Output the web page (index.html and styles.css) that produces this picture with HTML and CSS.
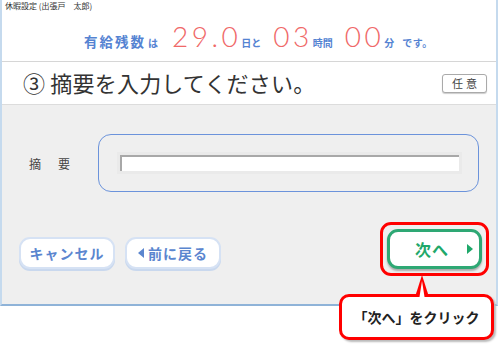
FILE: index.html
```html
<!DOCTYPE html>
<html lang="ja">
<head>
    <meta charset="UTF-8">
    <title>休暇設定</title>
    <link rel="stylesheet" href="styles.css">
</head>
<body>
    <div class="window">
        <div class="titlebar">休暇設定 (出張戸　太郎)</div>
        <div class="summary">
            <span class="lbl">有給残数</span><span class="sm">は</span>
            <span class="num first">29.0</span><span class="sm">日と</span>
            <span class="num">03</span><span class="sm">時間</span>
            <span class="num">00</span><span class="sm">分</span>
            <span class="sm tail">です。</span>
        </div>
        <div class="step">
            <h1>③ 摘要を入力してください。</h1>
            <span class="badge">任意</span>
        </div>
        <div class="content">
            <div class="field">
                <label for="tekiyo">摘　要</label>
                <div class="field-box">
                    <input type="text" id="tekiyo">
                </div>
            </div>
            <div class="actions">
                <button class="btn">キャンセル</button>
                <button class="btn back"><span class="tri-left"></span>前に戻る</button>
                <div class="next-wrap">
                    <button class="btn next">次へ<span class="tri-right"></span></button>
                </div>
            </div>
        </div>
        <div class="callout">
            <span class="callout-text">「次へ」をクリック</span>
        </div>
    </div>
</body>
</html>
```
FILE: styles.css
```css
body {
    margin: 0;
    min-height: 345px;
    font-family: "Noto Sans CJK JP", sans-serif;
    background: #fff;
}
.window {
    position: relative;
    width: 494px;
    border-left: 2px solid #c5daee;
    border-right: 2px solid #c5daee;
    border-bottom: 2px solid #8fb3d8;
}
.titlebar {
    height: 16px;
    font-size: 8px;
    line-height: 12px;
    padding-left: 3px;
    color: #333;
}
.summary {
    height: 45px;
    border-bottom: 1px solid #d6d6d6;
    display: flex;
    align-items: baseline;
    padding-left: 82px;
    color: #5583d2;
}
.summary .lbl {
    font-size: 13.5px;
    font-weight: bold;
    letter-spacing: 2px;
    margin-right: 2px;
}
.summary .sm {
    font-size: 10px;
    font-weight: bold;
}
.summary .num {
    font-family: "Lato", sans-serif;
    font-weight: 300;
    font-size: 28px;
    letter-spacing: 3.5px;
    color: #f06868;
    margin: 0 0 0 12px;
    line-height: 40px;
}
.summary .num.first {
    margin-left: 14px;
}
.summary .tail {
    margin-left: 8px;
    letter-spacing: 0.5px;
}
.step {
    height: 42px;
    border-bottom: 1px solid #dcdcdc;
    display: flex;
    align-items: center;
    justify-content: space-between;
    padding: 0 9px 0 21px;
}
.step h1 {
    margin: 0 0 3px;
    font-size: 22px;
    font-weight: normal;
    color: #333;
    letter-spacing: 0.2px;
}
.badge {
    font-size: 11px;
    line-height: 15px;
    color: #444;
    letter-spacing: 3px;
    padding: 1px 6px 1px 9px;
    border: 1px solid #aaa;
    border-radius: 3px;
    background: #fff;
    box-shadow: 0 1px 1px #ccc;
}
.content {
    background: #efefef;
    height: 199px;
    padding-top: 29px;
    box-sizing: border-box;
}
.field {
    display: flex;
    align-items: center;
}
.field label {
    width: 96px;
    padding-left: 27px;
    box-sizing: border-box;
    font-size: 12px;
    letter-spacing: 2.5px;
    color: #444;
}
.field-box {
    width: 381px;
    height: 58px;
    border: 1px solid #6b93db;
    border-radius: 13px;
    box-sizing: border-box;
    display: flex;
    align-items: center;
    padding-left: 21px;
}
.field-box input {
    width: 339px;
    height: 16px;
    border: none;
    border-top: 2px solid #a8a8a8;
    border-left: 2px solid #a8a8a8;
    box-sizing: border-box;
    background: #fff;
    outline: 3px solid #eaeaea;
}
.actions {
    display: flex;
    align-items: flex-start;
    margin-top: 30px;
    padding-left: 17px;
}
.btn {
    font-family: "Noto Sans CJK JP", sans-serif;
    font-weight: bold;
    font-size: 14px;
    letter-spacing: 1px;
    color: #5b86cf;
    background: #fff;
    border: 2px solid #d6e2f4;
    border-radius: 11px;
    box-shadow: 0 2px 0 #c9d8ee;
    width: 96px;
    height: 32px;
    display: flex;
    align-items: center;
    justify-content: center;
    margin: 15px 10px 0 0;
    padding: 0;
}
.tri-left {
    width: 0;
    height: 0;
    border-top: 5px solid transparent;
    border-bottom: 5px solid transparent;
    border-right: 6px solid #5b86cf;
    margin-right: 4px;
}
.next-wrap {
    margin-left: 149px;
    padding: 4px;
    border: 3px solid #f00;
    border-radius: 11px;
}
.btn.next {
    margin: 0;
    width: 95px;
    height: 40px;
    color: #1fa86a;
    font-size: 16px;
    border: 3px solid #2ea874;
    box-shadow: 0 2px 2px #aaa;
    justify-content: flex-end;
    padding-right: 6px;
}
.tri-right {
    width: 0;
    height: 0;
    border-top: 5px solid transparent;
    border-bottom: 5px solid transparent;
    border-left: 6px solid #1fa86a;
    margin-left: 18px;
}
.callout {
    position: absolute;
    left: 337px;
    top: 294px;
    width: 155px;
    height: 46px;
    border: 3px solid #f00;
    border-radius: 10px;
    background: #fff;
    box-sizing: border-box;
    box-shadow: 2px 2px 2px #bbb;
    text-align: center;
}
.callout-text {
    font-size: 14px;
    font-weight: bold;
    color: #222;
    line-height: 40px;
}
.callout::before {
    content: "";
    position: absolute;
    left: 73px;
    top: -22px;
    border-left: 7px solid transparent;
    border-right: 7px solid transparent;
    border-bottom: 22px solid #f00;
}
.callout::after {
    content: "";
    position: absolute;
    left: 77px;
    top: -16px;
    border-left: 3px solid transparent;
    border-right: 3px solid transparent;
    border-bottom: 19px solid #fff;
}
```
